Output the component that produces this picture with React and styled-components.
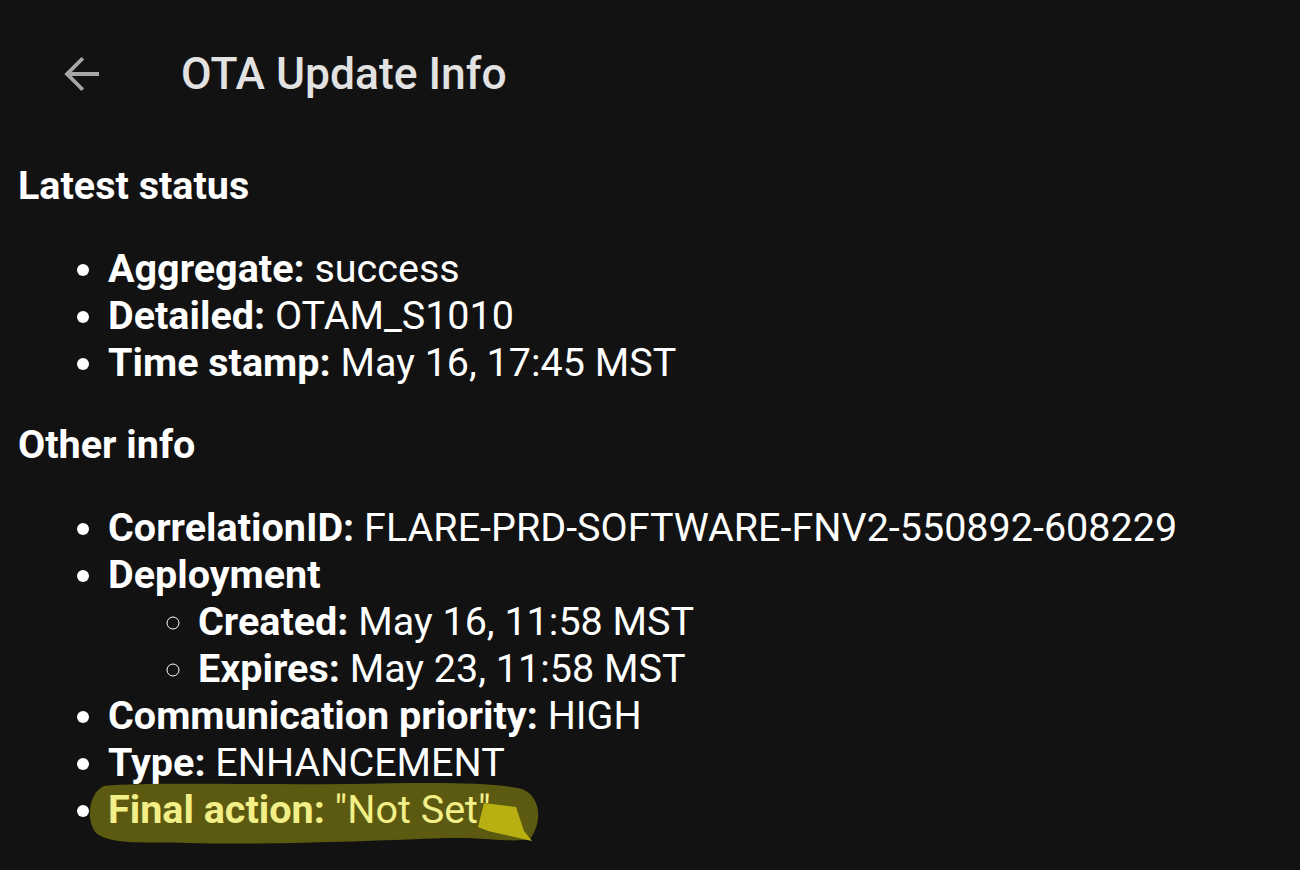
import React from "react";
import styled, { createGlobalStyle } from "styled-components";

const GlobalStyle = createGlobalStyle`
  html, body {
    margin: 0;
    padding: 0;
    background: #121212;
  }
  body {
    font-family: Roboto, "Noto Sans", sans-serif;
    color: #ffffff;
  }
`;

const latest = [
  { label: "Aggregate:", value: "success" },
  { label: "Detailed:", value: "OTAM_S1010" },
  { label: "Time stamp:", value: "May 16, 17:45 MST" },
];

const App = () => {
  return (
    <>
      <GlobalStyle />
      <Page>
        <TopBar>
          <BackButton aria-label="Back">
            <svg width="54" height="54" viewBox="0 0 24 24">
              <path
                d="M20 11.1H7.9l5.5-5.5L12.2 4.4 4.6 12l7.6 7.6 1.2-1.2-5.5-5.5H20z"
                fill="currentColor"
              />
            </svg>
          </BackButton>
          <Title>OTA Update Info</Title>
        </TopBar>

        <Content>
          <Heading>Latest status</Heading>
          <List>
            {latest.map((item) => (
              <li key={item.label}>
                <b>{item.label}</b> {item.value}
              </li>
            ))}
          </List>

          <Heading>Other info</Heading>
          <List>
            <li>
              <b>CorrelationID:</b> FLARE-PRD-SOFTWARE-FNV2-550892-608229
            </li>
            <li>
              <b>Deployment</b>
              <SubList>
                <li>
                  <b>Created:</b> May 16, 11:58 MST
                </li>
                <li>
                  <b>Expires:</b> May 23, 11:58 MST
                </li>
              </SubList>
            </li>
            <li>
              <b>Communication priority:</b> HIGH
            </li>
            <li>
              <b>Type:</b> ENHANCEMENT
            </li>
            <li>
              <Marked>
                <Highlight viewBox="0 0 452 64" preserveAspectRatio="none">
                  <path
                    d="M16 5 C60 1 160 4 260 3 C330 2 400 0 434 8 C454 16 454 42 442 58 C422 62 400 56 360 57 C280 60 180 64 100 62 C60 61 22 64 8 52 C-2 40 0 12 16 5 Z"
                    fill="#5c5a10"
                  />
                  <path
                    d="M396 22 L428 26 L436 50 L444 60 L400 50 L390 46 Z"
                    fill="#b8b012"
                  />
                </Highlight>
                <MarkText>
                  <b>Final action:</b> "Not Set"
                </MarkText>
              </Marked>
            </li>
          </List>
        </Content>
      </Page>
    </>
  );
};

export default App;

const Page = styled.div`
  width: 1300px;
  height: 870px;
  background: #121212;
  overflow: hidden;
`;

const TopBar = styled.div`
  display: flex;
  align-items: center;
  height: 148px;
  padding-left: 54px;
  box-sizing: border-box;
`;

const BackButton = styled.div`
  display: flex;
  align-items: center;
  justify-content: center;
  width: 54px;
  height: 54px;
  color: #a6a6a6;
`;

const Title = styled.div`
  margin-left: 73px;
  font-size: 44.4px;
  font-weight: 500;
  color: #e2e2e2;
`;

const Content = styled.div`
  padding: 14px 0 0 18px;
`;

const Heading = styled.div`
  font-size: 39.5px;
  font-weight: 700;
  line-height: 47px;
  margin: 0 0 36px;
`;

const List = styled.ul`
  margin: 0 0 35px;
  padding-left: 90px;
  font-size: 39.5px;
  line-height: 47px;

  b {
    font-weight: 700;
  }
`;

const SubList = styled.ul`
  margin: 0;
  padding-left: 90px;
  list-style-type: circle;
`;

const Marked = styled.span`
  position: relative;
  color: #f3ef88;
`;

const MarkText = styled.span`
  position: relative;
`;

const Highlight = styled.svg`
  position: absolute;
  left: -20px;
  top: -5px;
  width: 452px;
  height: 64px;
  pointer-events: none;
`;
